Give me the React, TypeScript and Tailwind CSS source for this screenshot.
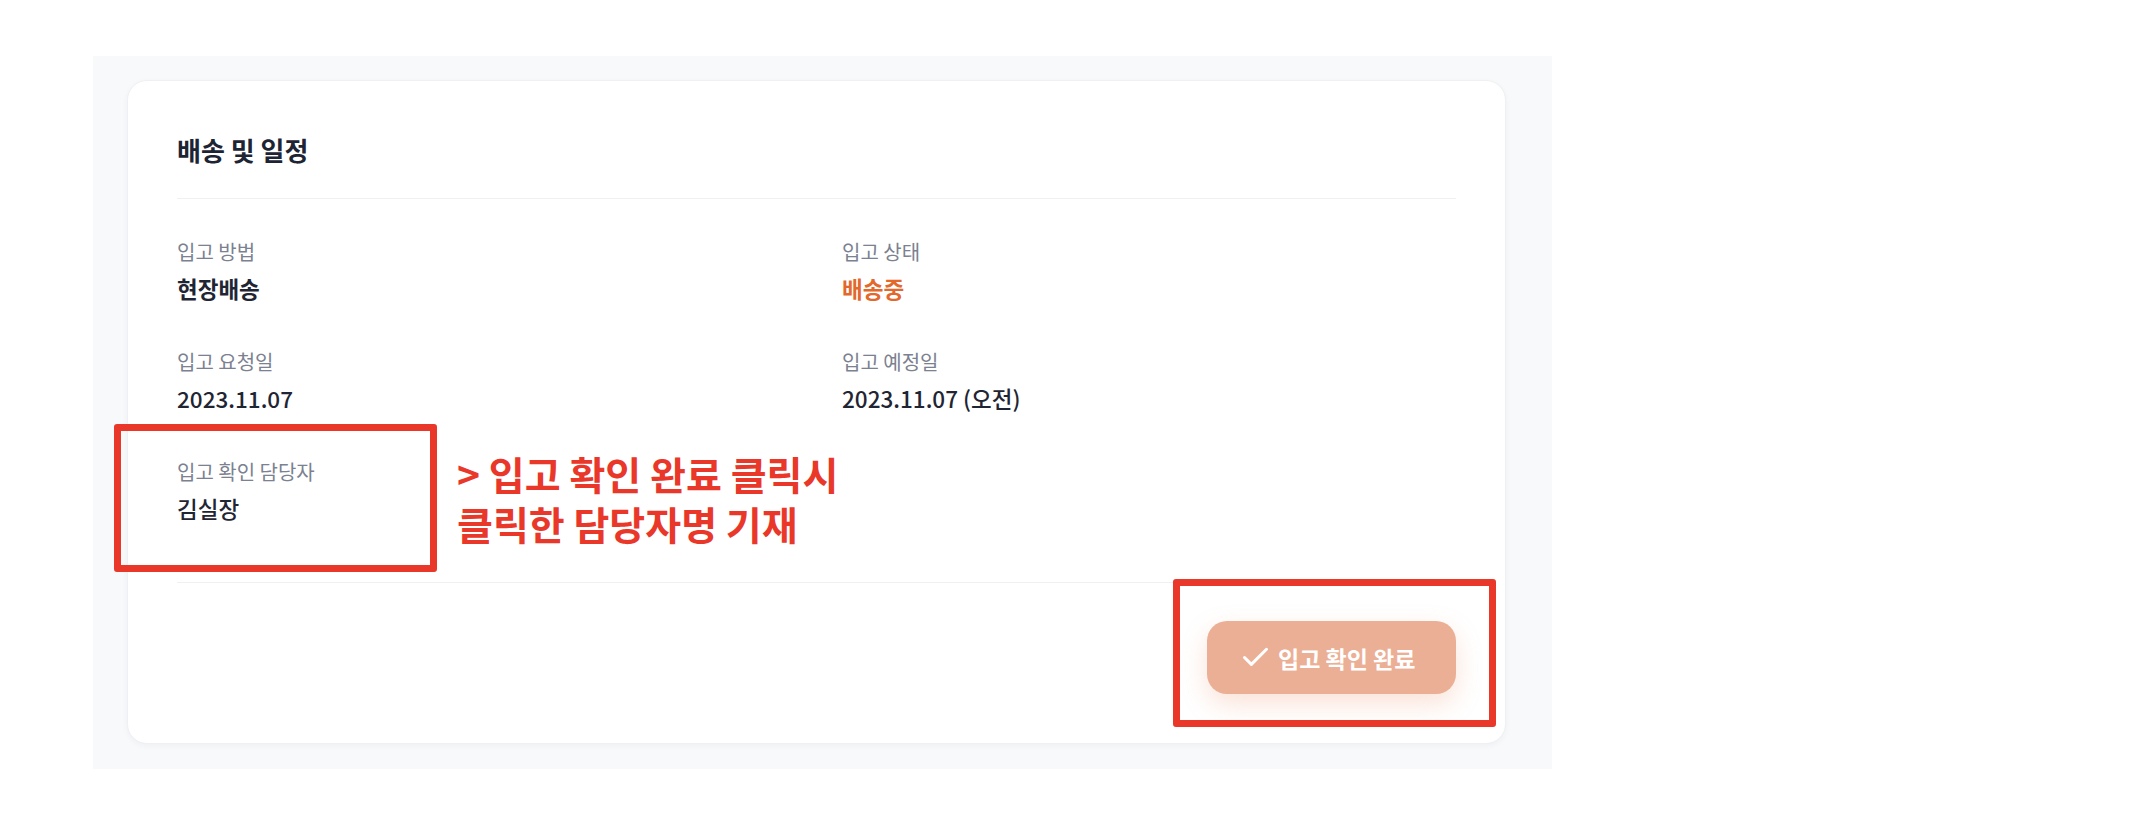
import React from "react";
import { Check } from "lucide-react";

type Item = { label: string; value: string; tone?: "bold" | "orange" | "normal" };

const items: Item[] = [
  { label: "입고 방법", value: "현장배송", tone: "bold" },
  { label: "입고 상태", value: "배송중", tone: "orange" },
  { label: "입고 요청일", value: "2023.11.07" },
  { label: "입고 예정일", value: "2023.11.07 (오전)" },
  { label: "입고 확인 담당자", value: "김실장", tone: "normal" },
];

function Field({ item }: { item: Item }) {
  const valueCls =
    item.tone === "bold"
      ? "font-bold text-[#1f2533]"
      : item.tone === "orange"
      ? "font-bold text-[#e2682c]"
      : "font-medium text-[#1f2533]";
  return (
    <div className="flex flex-col">
      <span className="text-[20px] leading-[24px] text-[#7b8190]">{item.label}</span>
      <span className={`mt-[9px] text-[22.5px] leading-[30px] ${valueCls}`}>{item.value}</span>
    </div>
  );
}

export default function App() {
  return (
    <div className="relative w-[2152px] h-[834px] bg-white pt-[56px] pl-[93px] font-['Noto_Sans_CJK_KR','Noto_Sans',sans-serif]">
      <div className="w-[1459px] h-[713px] bg-[#f8f9fb] pl-[34px] pt-[24px]">
        <div className="w-[1379px] h-[664px] bg-white rounded-[20px] border border-[#eef0f3] shadow-[0_2px_6px_rgba(20,30,60,0.04)] px-[49px] pt-[52px]">
          <h2 className="text-[26px] leading-[34px] font-bold text-[#1d2433]">배송 및 일정</h2>
          <div className="mt-[31px] h-px bg-[#eef0f3]" />
          <div className="mt-[41px] grid grid-cols-2 gap-x-[51px] gap-y-[47px]">
            {items.map((it) => (
              <Field key={it.label} item={it} />
            ))}
          </div>
          <div className="mt-[59px] h-px bg-[#eef0f3]" />
          <div className="mt-[38px] flex justify-end">
            <button className="w-[249px] h-[73px] rounded-[20px] bg-[#ebaf96] flex items-center pl-[32px] gap-[6px] text-white text-[23px] leading-[30px] font-bold shadow-[0_10px_26px_rgba(236,150,110,0.28)]">
              <Check size={33} strokeWidth={2.2} />
              <span>입고 확인 완료</span>
            </button>
          </div>
        </div>
      </div>

      {/* annotation overlays */}
      <div className="absolute left-[114px] top-[424px] w-[323px] h-[148px] border-[7px] border-[#e9382a] rounded-[3px]" />
      <div className="absolute left-[1173px] top-[579px] w-[323px] h-[148px] border-[7px] border-[#e9382a] rounded-[3px]" />
      <p className="absolute left-[457px] top-[448px] whitespace-pre-line text-[39px] leading-[50px] font-bold text-[#e9382a]">
        {"> 입고 확인 완료 클릭시\n클릭한 담당자명 기재"}
      </p>
    </div>
  );
}
